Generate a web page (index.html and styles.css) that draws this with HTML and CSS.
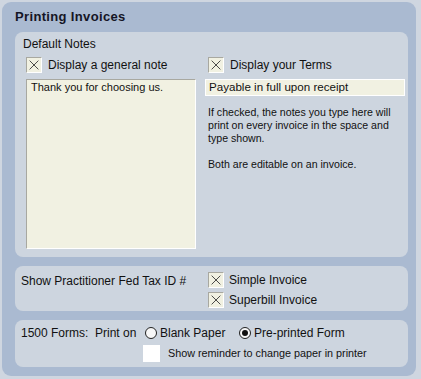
FILE: index.html
```html
<!DOCTYPE html>
<html>
<head>
<meta charset="utf-8">
<link rel="stylesheet" href="styles.css">
</head>
<body>
<div class="panel">
  <div class="title">Printing Invoices</div>

  <div class="box notes">
    <div class="box-label">Default Notes</div>
    <div class="cols">
      <div class="col-left">
        <div class="check-row">
          <span class="cb"><svg viewBox="0 0 16 16"><path d="M3 3L13 13M13 3L3 13"/></svg></span>
          <span class="cb-label">Display a general note</span>
        </div>
        <div class="textarea">Thank you for choosing us.</div>
      </div>
      <div class="col-right">
        <div class="check-row indent">
          <span class="cb"><svg viewBox="0 0 16 16"><path d="M3 3L13 13M13 3L3 13"/></svg></span>
          <span class="cb-label">Display your Terms</span>
        </div>
        <div class="input">Payable in full upon receipt</div>
        <p class="help">If checked, the notes you type here will print on every invoice in the space and type shown.</p>
        <p class="help">Both are editable on an invoice.</p>
      </div>
    </div>
  </div>

  <div class="box tax">
    <div class="tax-label">Show Practitioner Fed Tax ID #</div>
    <div class="tax-checks">
      <div class="check-row small">
        <span class="cb"><svg viewBox="0 0 16 16"><path d="M3 3L13 13M13 3L3 13"/></svg></span>
        <span class="cb-label">Simple Invoice</span>
      </div>
      <div class="check-row small">
        <span class="cb"><svg viewBox="0 0 16 16"><path d="M3 3L13 13M13 3L3 13"/></svg></span>
        <span class="cb-label">Superbill Invoice</span>
      </div>
    </div>
  </div>

  <div class="box forms">
    <div class="forms-row">
      <span class="forms-label">1500 Forms:&nbsp; Print on</span>
      <span class="radio"></span><span class="radio-label blank">Blank Paper</span>
      <span class="radio on"></span><span class="radio-label">Pre-printed Form</span>
    </div>
    <div class="reminder-row">
      <span class="cb white"></span>
      <span class="reminder">Show reminder to change paper in printer</span>
    </div>
  </div>
</div>
</body>
</html>
```

FILE: styles.css
```css
html, body {
  margin: 0;
  padding: 0;
}
body {
  background: #cfd6e0;
  font-family: "Liberation Sans", Arial, sans-serif;
  color: #111;
  width: 421px;
  height: 379px;
  overflow: hidden;
}
.panel {
  box-sizing: border-box;
  margin: 2px 0 0 2px;
  width: 414px;
  height: 374px;
  background: #aabad1;
  border-radius: 9px;
  padding: 0 8px 9px 13px;
  display: flex;
  flex-direction: column;
  gap: 9px;
}
.title {
  height: 22px;
  margin-bottom: -9px;
  padding-top: 8px;
  font-weight: bold;
  font-size: 13px;
  letter-spacing: 0.35px;
  line-height: 14px;
  color: #151525;
}
.box {
  background: #cdd5df;
  border-radius: 8px;
  box-sizing: border-box;
}
.notes {
  height: 225px;
  padding: 5px 0 0 8px;
}
.box-label {
  font-size: 12px;
  line-height: 14px;
  height: 14px;
}
.cols {
  display: grid;
  grid-template-columns: 170px 200px;
  column-gap: 9px;
  margin-left: 3px;
  margin-top: 5px;
}
.check-row {
  display: flex;
  align-items: center;
  height: 18px;
}
.check-row.indent {
  margin-left: 3px;
}
.cb {
  box-sizing: border-box;
  width: 16px;
  height: 16px;
  background: #f1f1e2;
  border-top: 1px solid #a8a8a0;
  border-left: 1px solid #a8a8a0;
  border-right: 1px solid #fff;
  border-bottom: 1px solid #fff;
  display: inline-block;
  flex: none;
}
.cb svg {
  display: block;
  width: 14px;
  height: 14px;
}
.cb svg path {
  stroke: #333;
  stroke-width: 1;
  fill: none;
}
.cb-label {
  font-size: 12px;
  margin-left: 6px;
  line-height: 14px;
}
.textarea {
  box-sizing: border-box;
  margin-top: 5px;
  width: 170px;
  height: 170px;
  background: #f1f1e2;
  border-top: 1px solid #a8a8a0;
  border-left: 1px solid #a8a8a0;
  border-right: 1px solid #fff;
  border-bottom: 1px solid #fff;
  font-size: 11px;
  line-height: 13px;
  padding: 1px 4px;
}
.input {
  box-sizing: border-box;
  margin-top: 5px;
  width: 200px;
  height: 17px;
  background: #f1f1e2;
  border: 1px solid #fff;
  font-size: 11.6px;
  line-height: 14px;
  padding: 0 3px;
}
.help {
  margin: 10px 0 0 3px;
  font-size: 10.6px;
  line-height: 13px;
  width: 195px;
}
.help + .help {
  margin-top: 13px;
}
.tax {
  height: 45px;
  display: flex;
  padding: 5px 0 0 6px;
}
.tax-label {
  font-size: 12px;
  width: 187px;
  line-height: 14px;
  padding-top: 3px;
}
.tax-checks {
  display: flex;
  flex-direction: column;
  gap: 3px;
}
.check-row.small {
  height: 17px;
}
.check-row.small .cb-label {
  margin-left: 5px;
}
.forms {
  height: 47px;
  padding: 6px 0 0 6px;
}
.forms-row {
  display: flex;
  align-items: center;
  height: 14px;
  font-size: 12px;
}
.forms-label {
  width: 124px;
}
.radio {
  box-sizing: border-box;
  width: 12px;
  height: 12px;
  border-radius: 50%;
  border: 1px solid #222;
  background: #f7f7f7;
  flex: none;
  margin-right: 3px;
  position: relative;
}
.radio.on::after {
  content: "";
  position: absolute;
  left: 2px;
  top: 2px;
  width: 6px;
  height: 6px;
  border-radius: 50%;
  background: #111;
}
.radio-label.blank {
  width: 79px;
}
.reminder-row {
  display: flex;
  align-items: center;
  margin-top: 5px;
  margin-left: 122px;
}
.cb.white {
  width: 17px;
  height: 17px;
  background: #fff;
  border: none;
}
.reminder {
  font-size: 10.8px;
  margin-left: 8px;
  line-height: 13px;
}
```
